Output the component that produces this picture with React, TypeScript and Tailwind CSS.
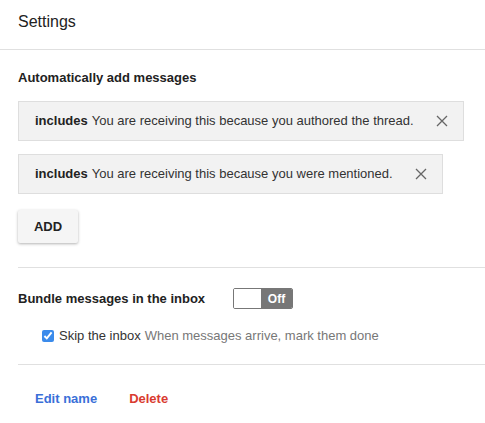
import { useState } from "react";

const rules = [
  "You are receiving this because you authored the thread.",
  "You are receiving this because you were mentioned.",
];

function CloseIcon() {
  return (
    <svg className="w-[12px] h-[12px]" viewBox="0 0 12 12" fill="none" stroke="#666" strokeWidth={1.3}>
      <path d="M1 1l10 10M11 1L1 11" />
    </svg>
  );
}

export default function App() {
  const [skip, setSkip] = useState(true);

  return (
    <div className="w-[485px] h-[423px] bg-white text-[#222] font-['Liberation_Sans',Arial,sans-serif] overflow-hidden">
      {/* Header */}
      <div className="h-[50px] flex items-center px-[18px] border-b border-[#e0e0e0]">
        <h1 className="text-[16px] pb-[6px]">Settings</h1>
      </div>

      {/* Automatic rules */}
      <div className="ml-[18px] pt-[20px] pb-[24px] border-b border-[#e0e0e0]">
        <h2 className="text-[13px] font-bold leading-[16px]">Automatically add messages</h2>
        <div className="mt-[15px] flex flex-col items-start gap-[13px]">
          {rules.map((rule) => (
            <div
              key={rule}
              className="inline-flex items-center h-[40px] pl-[16px] pr-[13px] bg-[#f2f2f2] border border-[#dedede] text-[13px]"
            >
              <span className="font-bold">includes</span>
              <span className="ml-[4px] text-[#333]">{rule}</span>
              <button className="ml-[20px] p-[2px]">
                <CloseIcon />
              </button>
            </div>
          ))}
        </div>
        <button className="mt-[16px] w-[60px] h-[33px] bg-[#f5f5f5] rounded-[2px] text-[13px] font-bold shadow-[0_1px_3px_rgba(0,0,0,0.3)]">
          ADD
        </button>
      </div>

      {/* Bundle */}
      <div className="ml-[18px] pt-[20px] pb-[18px] border-b border-[#e0e0e0]">
        <div className="flex items-center h-[21px]">
          <span className="text-[13px] font-bold w-[215px]">Bundle messages in the inbox</span>
          <div className="flex w-[60px] h-[21px] border border-[#777] rounded-[2px] overflow-hidden">
            <div className="w-[27px] bg-white" />
            <div className="flex-1 bg-[#777] text-white text-[12px] font-bold flex items-center justify-center">
              Off
            </div>
          </div>
        </div>
        <label className="mt-[17px] ml-[24px] flex items-center text-[13px]">
          <input
            type="checkbox"
            checked={skip}
            onChange={() => setSkip(!skip)}
            className="w-[12px] h-[12px] accent-[#3b8beb] m-0"
          />
          <span className="ml-[5px] text-[#333]">Skip the inbox</span>
          <span className="ml-[4px] text-[#777]">When messages arrive, mark them done</span>
        </label>
      </div>

      {/* Actions */}
      <div className="flex items-center gap-[32px] pl-[35px] pt-[24px] text-[13px] font-bold">
        <button className="text-[#3a6fd8]">Edit name</button>
        <button className="text-[#d93b30]">Delete</button>
      </div>
    </div>
  );
}
